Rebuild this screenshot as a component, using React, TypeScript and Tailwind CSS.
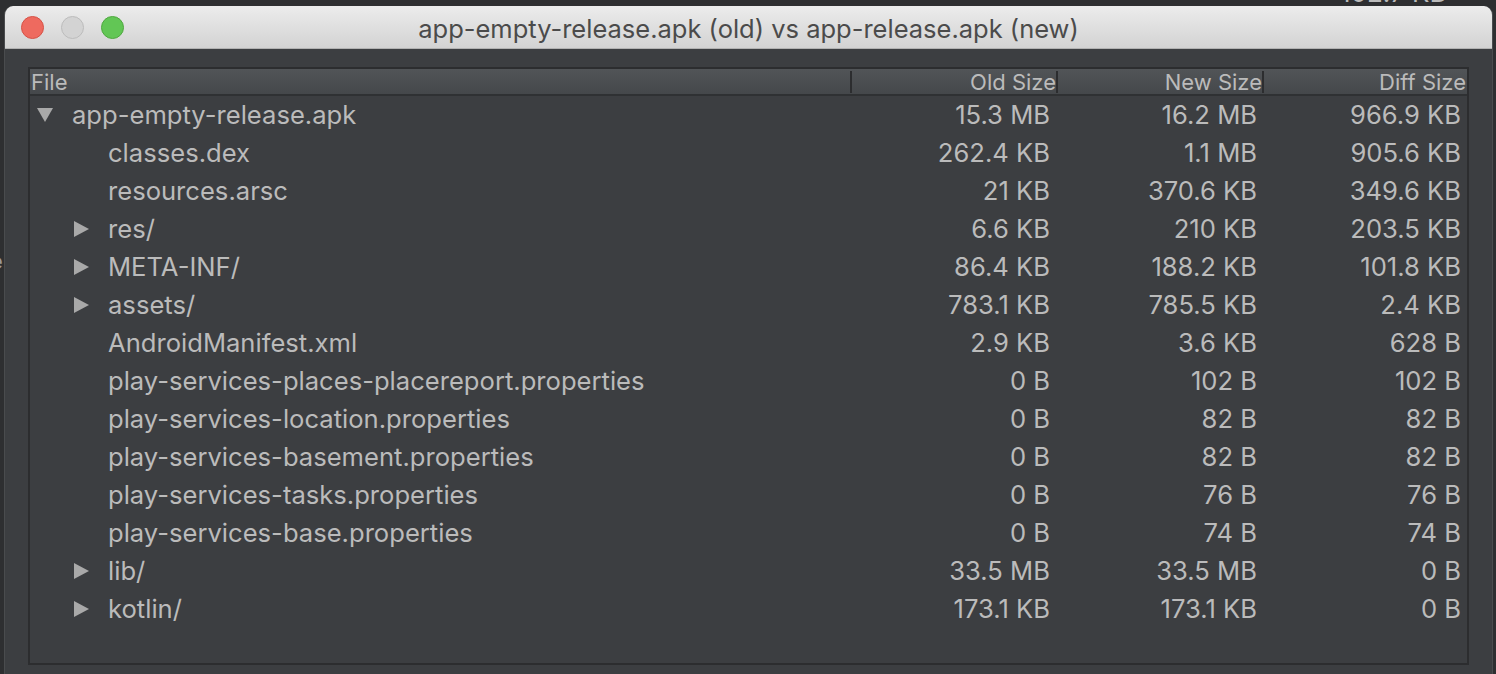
import React from "react";

type Row = {
  name: string;
  level: number;
  toggle: "open" | "closed" | null;
  old: string;
  nw: string;
  diff: string;
};

const rows: Row[] = [
  { name: "app-empty-release.apk", level: 0, toggle: "open", old: "15.3 MB", nw: "16.2 MB", diff: "966.9 KB" },
  { name: "classes.dex", level: 1, toggle: null, old: "262.4 KB", nw: "1.1 MB", diff: "905.6 KB" },
  { name: "resources.arsc", level: 1, toggle: null, old: "21 KB", nw: "370.6 KB", diff: "349.6 KB" },
  { name: "res/", level: 1, toggle: "closed", old: "6.6 KB", nw: "210 KB", diff: "203.5 KB" },
  { name: "META-INF/", level: 1, toggle: "closed", old: "86.4 KB", nw: "188.2 KB", diff: "101.8 KB" },
  { name: "assets/", level: 1, toggle: "closed", old: "783.1 KB", nw: "785.5 KB", diff: "2.4 KB" },
  { name: "AndroidManifest.xml", level: 1, toggle: null, old: "2.9 KB", nw: "3.6 KB", diff: "628 B" },
  { name: "play-services-places-placereport.properties", level: 1, toggle: null, old: "0 B", nw: "102 B", diff: "102 B" },
  { name: "play-services-location.properties", level: 1, toggle: null, old: "0 B", nw: "82 B", diff: "82 B" },
  { name: "play-services-basement.properties", level: 1, toggle: null, old: "0 B", nw: "82 B", diff: "82 B" },
  { name: "play-services-tasks.properties", level: 1, toggle: null, old: "0 B", nw: "76 B", diff: "76 B" },
  { name: "play-services-base.properties", level: 1, toggle: null, old: "0 B", nw: "74 B", diff: "74 B" },
  { name: "lib/", level: 1, toggle: "closed", old: "33.5 MB", nw: "33.5 MB", diff: "0 B" },
  { name: "kotlin/", level: 1, toggle: "closed", old: "173.1 KB", nw: "173.1 KB", diff: "0 B" },
];

function Toggle({ kind }: { kind: "open" | "closed" | null }) {
  if (kind === "open") {
    return (
      <svg width="16" height="14" viewBox="0 0 16 14">
        <polygon points="0,0 16,0 8,14" fill="#a9a9a9" />
      </svg>
    );
  }
  if (kind === "closed") {
    return (
      <svg width="15" height="16" viewBox="0 0 15 16">
        <polygon points="0,0 15,8 0,16" fill="#a9a9a9" />
      </svg>
    );
  }
  return null;
}

export default function App() {
  return (
    <div
      className="relative w-[1496px] h-[674px] overflow-hidden bg-[#2e2f31]"
      style={{ fontFamily: "Inter, 'Liberation Sans', sans-serif" }}
    >
      {/* background window fragments */}
      <div className="absolute left-[1340px] top-[-20px] text-[26px] leading-[26px] text-[#bbbbbb]">102.7 KB</div>
      <div className="absolute left-[-10px] top-[250px] text-[22px] leading-[22px] text-[#9a9a9a]">e</div>

      {/* window */}
      <div className="absolute left-[4px] top-[6px] w-[1489px] h-[690px] flex flex-col rounded-t-[9px] overflow-hidden bg-[#3c3e41] border-x border-[#4a4c4e]">
        {/* title bar */}
        <div className="relative h-[43px] shrink-0 flex items-center justify-center bg-gradient-to-b from-[#ececec] to-[#d3d3d3] border-b border-[#b2b2b2]">
          <div className="absolute left-[16px] top-[10px] flex gap-[17px]">
            <div className="w-[23px] h-[23px] rounded-full bg-[#ee6a5f] border border-[#d65246]" />
            <div className="w-[23px] h-[23px] rounded-full bg-[#d3d3d3] border border-[#bcbcbc]" />
            <div className="w-[23px] h-[23px] rounded-full bg-[#62c655] border border-[#4fa83f]" />
          </div>
          <span className="pt-[5px] text-[25.5px] text-[#4b4b4b]">app-empty-release.apk (old) vs app-release.apk (new)</span>
        </div>

        {/* body */}
        <div className="flex-1 pl-[23px] pr-[23px] pt-[18px]">
          <div className="h-[598px] border-2 border-[#2c2d2f] flex flex-col">
            {/* header */}
            <div className="h-[27px] shrink-0 flex bg-gradient-to-b from-[#515457] to-[#45484b] border-b-2 border-[#2f3133] text-[22px] leading-[26px] text-[#bbbbbb]">
              <div className="w-[822px] flex items-center justify-between pl-[1px]">
                <span>File</span>
                <div className="w-[2px] h-[22px] bg-[#2c2d2f]" />
              </div>
              <div className="w-[206px] flex items-center justify-end">
                <span>Old Size</span>
                <div className="w-[2px] h-[22px] bg-[#2c2d2f]" />
              </div>
              <div className="w-[206px] flex items-center justify-end">
                <span>New Size</span>
                <div className="w-[2px] h-[22px] bg-[#2c2d2f]" />
              </div>
              <div className="flex-1 flex items-center justify-end pr-[1px]">
                <span>Diff Size</span>
              </div>
            </div>

            {/* rows */}
            <div className="flex flex-col text-[25.6px] text-[#bbbbbb]">
              {rows.map((r) => (
                <div key={r.name} className="h-[38px] flex items-center leading-[38px]">
                  <div className="w-[822px] flex items-center">
                    <div
                      className={
                        r.level === 0
                          ? "w-[42px] pl-[7px] flex items-center"
                          : "w-[78px] pl-[44px] flex items-center"
                      }
                    >
                      <Toggle kind={r.toggle} />
                    </div>
                    <span className="whitespace-nowrap">{r.name}</span>
                  </div>
                  <div className="w-[206px] text-right pr-[8px]">{r.old}</div>
                  <div className="w-[206px] text-right pr-[7px]">{r.nw}</div>
                  <div className="flex-1 text-right pr-[6px]">{r.diff}</div>
                </div>
              ))}
            </div>
          </div>
        </div>
      </div>
    </div>
  );
}
